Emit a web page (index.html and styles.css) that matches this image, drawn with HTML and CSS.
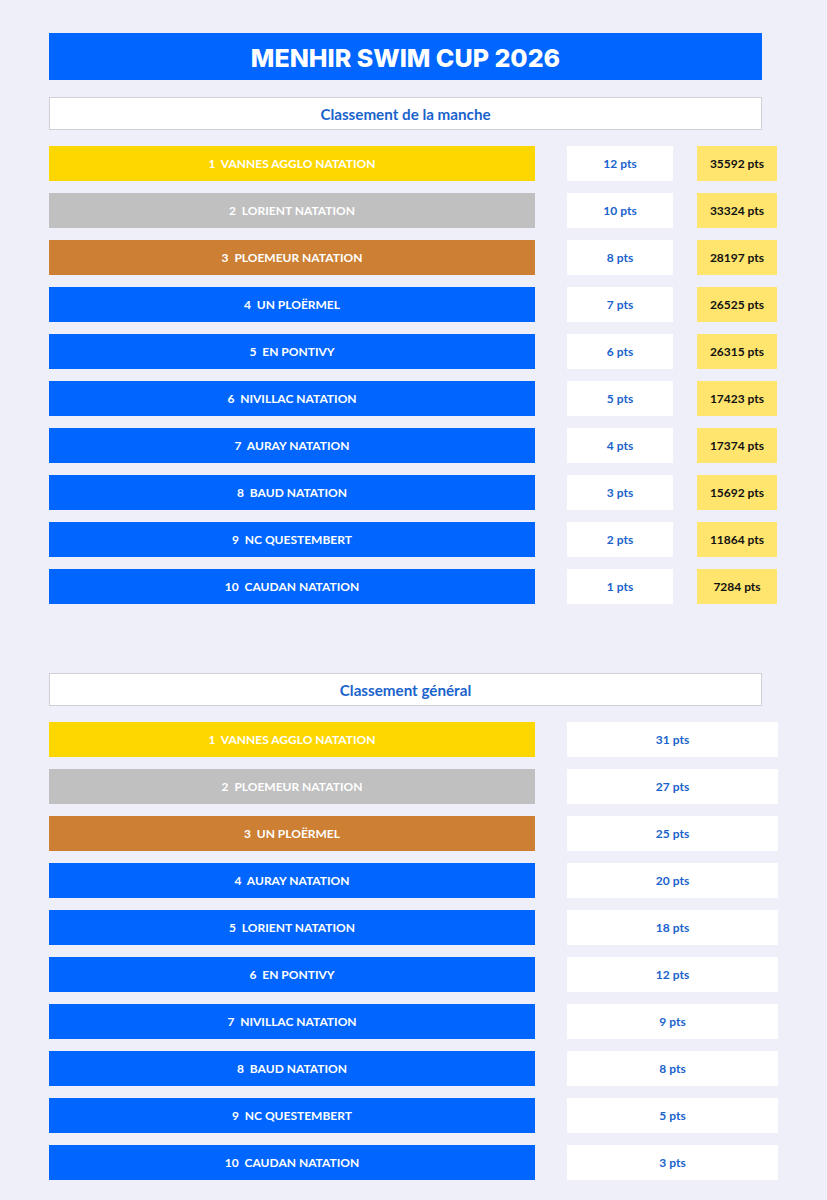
FILE: index.html
```html
<!DOCTYPE html>
<html lang="fr">
<head>
<meta charset="utf-8">
<title>Menhir Swim Cup 2026</title>
<link rel="stylesheet" href="styles.css">
</head>
<body>
<main class="page">
  <h1 class="title">MENHIR SWIM CUP 2026</h1>

  <section class="section">
    <h2 class="subtitle">Classement de la manche</h2>
    <div class="rows">
      <div class="row round"><div class="name gold">1&nbsp; VANNES AGGLO NATATION</div><div class="pts">12 pts</div><div class="total">35592 pts</div></div>
      <div class="row round"><div class="name silver">2&nbsp; LORIENT NATATION</div><div class="pts">10 pts</div><div class="total">33324 pts</div></div>
      <div class="row round"><div class="name bronze">3&nbsp; PLOEMEUR NATATION</div><div class="pts">8 pts</div><div class="total">28197 pts</div></div>
      <div class="row round"><div class="name">4&nbsp; UN PLOËRMEL</div><div class="pts">7 pts</div><div class="total">26525 pts</div></div>
      <div class="row round"><div class="name">5&nbsp; EN PONTIVY</div><div class="pts">6 pts</div><div class="total">26315 pts</div></div>
      <div class="row round"><div class="name">6&nbsp; NIVILLAC NATATION</div><div class="pts">5 pts</div><div class="total">17423 pts</div></div>
      <div class="row round"><div class="name">7&nbsp; AURAY NATATION</div><div class="pts">4 pts</div><div class="total">17374 pts</div></div>
      <div class="row round"><div class="name">8&nbsp; BAUD NATATION</div><div class="pts">3 pts</div><div class="total">15692 pts</div></div>
      <div class="row round"><div class="name">9&nbsp; NC QUESTEMBERT</div><div class="pts">2 pts</div><div class="total">11864 pts</div></div>
      <div class="row round"><div class="name">10&nbsp; CAUDAN NATATION</div><div class="pts">1 pts</div><div class="total">7284 pts</div></div>
    </div>
  </section>

  <section class="section general">
    <h2 class="subtitle">Classement général</h2>
    <div class="rows">
      <div class="row overall"><div class="name gold">1&nbsp; VANNES AGGLO NATATION</div><div class="pts">31 pts</div></div>
      <div class="row overall"><div class="name silver">2&nbsp; PLOEMEUR NATATION</div><div class="pts">27 pts</div></div>
      <div class="row overall"><div class="name bronze">3&nbsp; UN PLOËRMEL</div><div class="pts">25 pts</div></div>
      <div class="row overall"><div class="name">4&nbsp; AURAY NATATION</div><div class="pts">20 pts</div></div>
      <div class="row overall"><div class="name">5&nbsp; LORIENT NATATION</div><div class="pts">18 pts</div></div>
      <div class="row overall"><div class="name">6&nbsp; EN PONTIVY</div><div class="pts">12 pts</div></div>
      <div class="row overall"><div class="name">7&nbsp; NIVILLAC NATATION</div><div class="pts">9 pts</div></div>
      <div class="row overall"><div class="name">8&nbsp; BAUD NATATION</div><div class="pts">8 pts</div></div>
      <div class="row overall"><div class="name">9&nbsp; NC QUESTEMBERT</div><div class="pts">5 pts</div></div>
      <div class="row overall"><div class="name">10&nbsp; CAUDAN NATATION</div><div class="pts">3 pts</div></div>
    </div>
  </section>
</main>
</body>
</html>
```
FILE: styles.css
```css
* { box-sizing: border-box; }
html, body { margin: 0; padding: 0; }
body {
  background: #eeeff8;
  font-family: "Lato", "Open Sans", Arial, sans-serif;
}
.page {
  padding: 33px 0 20px 49px;
  width: 827px;
}
.title {
  margin: 0;
  width: 713px;
  height: 47px;
  background: #0066ff;
  color: #ffffff;
  font-family: "Inter", "Open Sans", sans-serif;
  font-weight: 800;
  font-size: 25px;
  letter-spacing: 0;
  padding-top: 2px;
  display: flex;
  align-items: center;
  justify-content: center;
}
.section { margin-top: 17px; }
.section.general { margin-top: 69px; }
.subtitle {
  margin: 0;
  width: 713px;
  height: 33px;
  background: #ffffff;
  border: 1px solid #cfd0d8;
  color: #1a63cc;
  font-size: 15.2px;
  font-weight: 700;
  display: flex;
  align-items: center;
  justify-content: center;
}
.rows {
  margin-top: 16px;
  display: flex;
  flex-direction: column;
  gap: 12px;
}
.row {
  display: flex;
  height: 35px;
  font-size: 12px;
  font-weight: 700;
}
.row > div {
  display: flex;
  align-items: center;
  justify-content: center;
  flex: none;
  white-space: nowrap;
}
.name { width: 486px; background: #0066ff; color: #ffffff; }
.name.gold { background: #ffd700; }
.name.silver { background: #c0c0c0; }
.name.bronze { background: #cd8033; }
.pts { margin-left: 32px; background: #ffffff; color: #1a63cc; }
.round .pts { width: 106px; }
.overall .pts { width: 211px; }
.total { margin-left: 24px; width: 80px; background: #ffe46e; color: #111111; }
```
